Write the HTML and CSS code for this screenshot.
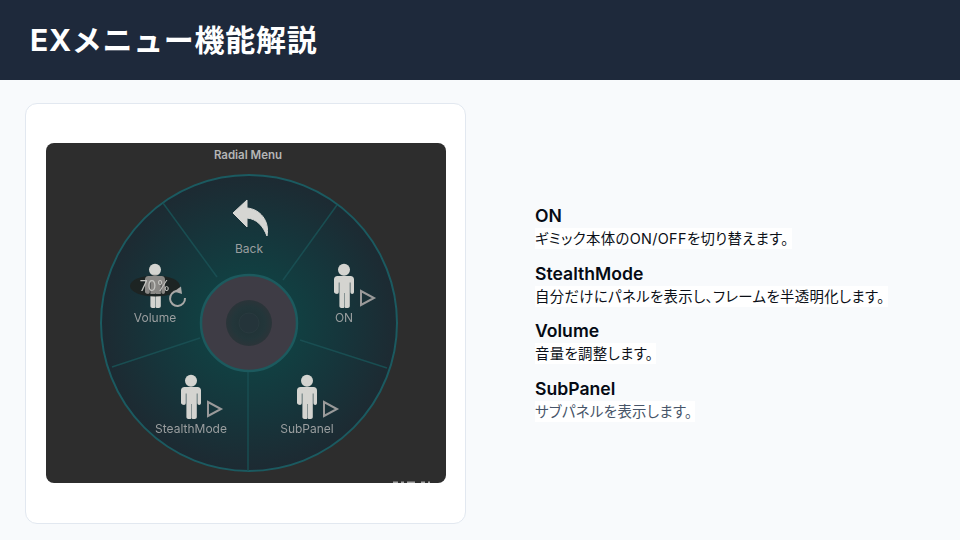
FILE: index.html
```html
<!DOCTYPE html>
<html lang="ja">
<head>
    <meta charset="UTF-8">
    <title>EXメニュー機能解説</title>
    <link rel="stylesheet" href="styles.css">
</head>
<body>

<header class="page-header">
    <h1>EXメニュー機能解説</h1>
</header>

<main class="page-main">
    <div class="shot-card">
        <svg class="radial-shot" viewBox="0 0 400 340" width="400" height="340">
            <defs>
                <radialGradient id="wheelFill" gradientUnits="userSpaceOnUse" cx="203" cy="180" r="148">
                    <stop offset="0.3" stop-color="#114042"/>
                    <stop offset="0.65" stop-color="#16353b"/>
                    <stop offset="1" stop-color="#1d2a32"/>
                </radialGradient>
                <radialGradient id="hubFill" gradientUnits="userSpaceOnUse" cx="203" cy="180" r="23">
                    <stop offset="0" stop-color="#1f3034"/>
                    <stop offset="0.7" stop-color="#23363a"/>
                    <stop offset="1" stop-color="#2b3439"/>
                </radialGradient>
                <symbol id="person" viewBox="0 0 22 44" overflow="visible">
                    <circle cx="11" cy="5.8" r="6"/>
                    <path d="M4.500 12h13c2.200 0 3.500 1.500 3.500 3.500V28c0 1.200-.8 2-1.800 2s-1.800-.8-1.800-2V18.500h-.6V42c0 1.200-.8 2-2.100 2h-2c-.6 0-.9-.4-.9-1V29h-.4v14c0 .6-.3 1-.9 1h-2c-1.300 0-2.100-.8-2.100-2V18.500h-.6V28c0 1.200-.8 2-1.800 2S1 29.200 1 28V15.500C1 13.500 2.300 12 4.500 12z"/>
                </symbol>
                <symbol id="play" viewBox="0 0 15 16" overflow="visible">
                    <path d="M1 1V15L14 8z"/>
                </symbol>
            </defs>

            <rect class="shot-bg" width="400" height="340"/>
            <text class="shot-title" x="202" y="16">Radial Menu</text>

            <circle class="wheel" cx="203" cy="180" r="148"/>
            <path class="spoke" d="M117 60L171 134"/>
            <path class="spoke" d="M291 62L237 137"/>
            <path class="spoke" d="M254 197L341 225"/>
            <path class="spoke" d="M154 195L66 224"/>
            <path class="spoke" d="M202 229V328"/>
            <circle class="hub-ring" cx="203" cy="180" r="48"/>
            <circle class="hub" cx="203" cy="180" r="23"/>
            <circle class="hub-dot" cx="203" cy="180" r="10"/>

            <path class="back-arrow" d="M187 70L201 57V65C214 66 224 78 221 93C217 83 211 76 201 75V84z"/>
            <text class="item-label" x="203" y="110">Back</text>

            <use class="person" href="#person" x="287" y="121" width="22" height="44"/>
            <use class="play" href="#play" x="314" y="147" width="15" height="16"/>
            <text class="item-label" x="298" y="179">ON</text>

            <use class="person" href="#person" x="250" y="232" width="22" height="44"/>
            <use class="play" href="#play" x="277" y="258" width="15" height="16"/>
            <text class="item-label" x="261" y="290">SubPanel</text>

            <use class="person" href="#person" x="134" y="232" width="22" height="44"/>
            <use class="play" href="#play" x="161" y="258" width="15" height="16"/>
            <text class="item-label" x="145" y="290">StealthMode</text>

            <use class="person" href="#person" x="98" y="121" width="22" height="44"/>
            <ellipse class="vol-pill" cx="109" cy="143" rx="25" ry="10.500"/>
            <use class="person shade" href="#person" x="98" y="121" width="22" height="44"/>
            <text class="vol-value" x="109" y="147.500">70%</text>
            <path class="reset" d="M139 155A7.500 7.500 0 1 1 131 148"/>
            <path class="reset-tip" d="M128 148.500L135 143.500L136 151z"/>
            <text class="item-label" x="109" y="179">Volume</text>

            <path class="shot-cut" d="M347 339.300h5M355 339.300h3M361 339.300h8M375 339.300h4M382 339.300h2"/>
        </svg>
    </div>

    <section class="notes">
        <div class="note">
            <h2>ON</h2>
            <p>ギミック本体のON/OFFを切り替えます。</p>
        </div>
        <div class="note">
            <h2>StealthMode</h2>
            <p>自分だけにパネルを表示し、フレームを半透明化します。</p>
        </div>
        <div class="note">
            <h2>Volume</h2>
            <p>音量を調整します。</p>
        </div>
        <div class="note">
            <h2>SubPanel</h2>
            <p class="muted">サブパネルを表示します。</p>
        </div>
    </section>
</main>

</body>
</html>
```

FILE: styles.css
```css
* {
    box-sizing: border-box;
}
body {
    margin: 0;
    width: 960px;
    height: 540px;
    overflow: hidden;
    background-color: #f8fafc;
    font-family: Inter, "Noto Sans CJK JP", sans-serif;
    display: flex;
    flex-direction: column;
}
.page-header {
    height: 80px;
    flex: none;
    padding: 0 30px;
    display: flex;
    align-items: center;
    background-color: #1e293b;
}
.page-header h1 {
    margin: 0;
    color: #fff;
    font-size: 30px;
    font-weight: 700;
    line-height: 1.2;
    letter-spacing: 0.7px;
}
.page-main {
    flex: 1;
    display: flex;
    align-items: center;
    padding: 7px 0 0 25px;
}
.shot-card {
    width: 441px;
    height: 421px;
    flex: none;
    padding: 39px 19px 0 20px;
    background-color: #fff;
    border: 1px solid #e2e8f0;
    border-radius: 12px;
}
.radial-shot {
    display: block;
    border-radius: 8px;
    filter: blur(0.6px);
}
.shot-bg {
    fill: #2d2d2d;
}
.shot-title {
    fill: #b5b5b5;
    font-size: 11.500px;
    font-weight: 600;
    text-anchor: middle;
}
.wheel {
    fill: url(#wheelFill);
    stroke: #1b5a60;
    stroke-width: 2;
}
.spoke {
    fill: none;
    stroke: #194e52;
    stroke-width: 1.5;
}
.hub-ring {
    fill: #3e3c45;
    stroke: #1c5a5e;
    stroke-width: 2.5;
}
.hub {
    fill: url(#hubFill);
}
.hub-dot {
    fill: #24343a;
    stroke: #293a3f;
}
.back-arrow {
    fill: #d6d6d3;
    stroke: #d6d6d3;
    stroke-linejoin: round;
}
.item-label {
    fill: #9a9e9f;
    font-size: 12px;
    text-anchor: middle;
}
.person {
    fill: #d4d4d0;
}
.person.shade {
    fill: #8a8885;
    clip-path: inset(11px 0 14px 0);
}
.play {
    fill: none;
    stroke: #9a9a9a;
    stroke-width: 2;
}
.vol-pill {
    fill: #1d2423;
}
.vol-value {
    fill: #c4c4c0;
    font-size: 14px;
    text-anchor: middle;
}
.reset {
    fill: none;
    stroke: #a8a8a6;
    stroke-width: 2;
}
.reset-tip {
    fill: #a8a8a6;
}
.shot-cut {
    fill: none;
    stroke: #a5a5a5;
    stroke-width: 1.4;
}
.notes {
    margin-left: 69px;
    display: flex;
    flex-direction: column;
    gap: 12.500px;
    margin-top: -1px;
}
.note h2 {
    margin: 0;
    color: #050a14;
    font-size: 17.600px;
    font-weight: 600;
    line-height: 24px;
}
.note p {
    margin: 0;
    width: fit-content;
    padding-right: 3px;
    color: #0b0f17;
    font-size: 14.400px;
    line-height: 21px;
    letter-spacing: 0.35px;
    font-feature-settings: "palt";
    background-color: #fff;
}
.note p.muted {
    color: #475569;
}
```
